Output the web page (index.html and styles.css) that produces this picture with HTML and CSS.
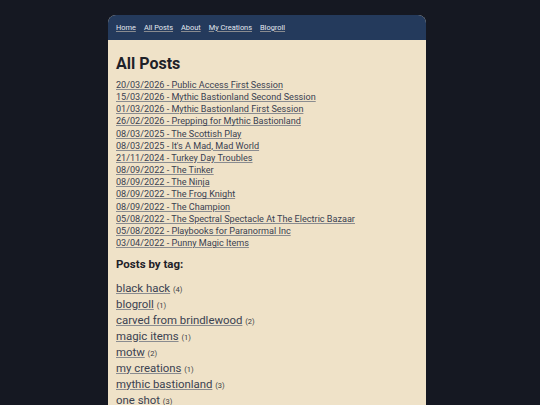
FILE: index.html
```html
<!DOCTYPE html>
<html lang="en">
<head>
    <meta charset="UTF-8">
    <title>All Posts</title>
    <link rel="stylesheet" href="styles.css">
</head>
<body>

<div class="page">
    <nav class="nav">
        <a href="#">Home</a>
        <a href="#">All Posts</a>
        <a href="#">About</a>
        <a href="#">My Creations</a>
        <a href="#">Blogroll</a>
    </nav>

    <main class="content">
        <h1>All Posts</h1>

        <ul class="posts">
            <li><a href="#">20/03/2026 - Public Access First Session</a></li>
            <li><a href="#">15/03/2026 - Mythic Bastionland Second Session</a></li>
            <li><a href="#">01/03/2026 - Mythic Bastionland First Session</a></li>
            <li><a href="#">26/02/2026 - Prepping for Mythic Bastionland</a></li>
            <li><a href="#">08/03/2025 - The Scottish Play</a></li>
            <li><a href="#">08/03/2025 - It's A Mad, Mad World</a></li>
            <li><a href="#">21/11/2024 - Turkey Day Troubles</a></li>
            <li><a href="#">08/09/2022 - The Tinker</a></li>
            <li><a href="#">08/09/2022 - The Ninja</a></li>
            <li><a href="#">08/09/2022 - The Frog Knight</a></li>
            <li><a href="#">08/09/2022 - The Champion</a></li>
            <li><a href="#">05/08/2022 - The Spectral Spectacle At The Electric Bazaar</a></li>
            <li><a href="#">05/08/2022 - Playbooks for Paranormal Inc</a></li>
            <li><a href="#">03/04/2022 - Punny Magic Items</a></li>
        </ul>

        <h2>Posts by tag:</h2>

        <ul class="tags">
            <li><a href="#">black hack</a> <span class="count">(4)</span></li>
            <li><a href="#">blogroll</a> <span class="count">(1)</span></li>
            <li><a href="#">carved from brindlewood</a> <span class="count">(2)</span></li>
            <li><a href="#">magic items</a> <span class="count">(1)</span></li>
            <li><a href="#">motw</a> <span class="count">(2)</span></li>
            <li><a href="#">my creations</a> <span class="count">(1)</span></li>
            <li><a href="#">mythic bastionland</a> <span class="count">(3)</span></li>
            <li><a href="#">one shot</a> <span class="count">(3)</span></li>
        </ul>
    </main>
</div>

</body>
</html>
```

FILE: styles.css
```css
body { margin: 0; padding: 15px 6px 0 0; background: #151822; font-family: Roboto, "Liberation Sans", sans-serif; color: #1e2128; }
.page { width: 318px; margin: 0 auto; background: #efe2c8; border-radius: 8px 8px 0 0; overflow: hidden; min-height: 400px; }

.nav { height: 25px; padding: 0 8px; display: flex; align-items: center; gap: 8px; background: #243a5c; font-size: 7.4px; }
.nav a { color: #e3e8f0; }

.content { padding: 14px 8px 0; }
h1 { margin: 0; font-size: 16px; line-height: 20px; font-weight: bold; }
h2 { margin: 8px 0 0; font-size: 11.5px; line-height: 14px; font-weight: bold; }

ul { list-style: none; margin: 0; padding: 0; }
a { color: #3a4151; text-decoration-color: #8a8c90; }

.posts { margin-top: 5px; font-size: 9.1px; line-height: 12.15px; }
.tags { margin-top: 8.5px; font-size: 11.4px; line-height: 16px; }
.tags .count { font-size: 7.5px; line-height: 1; color: #3a3d44; }
```
